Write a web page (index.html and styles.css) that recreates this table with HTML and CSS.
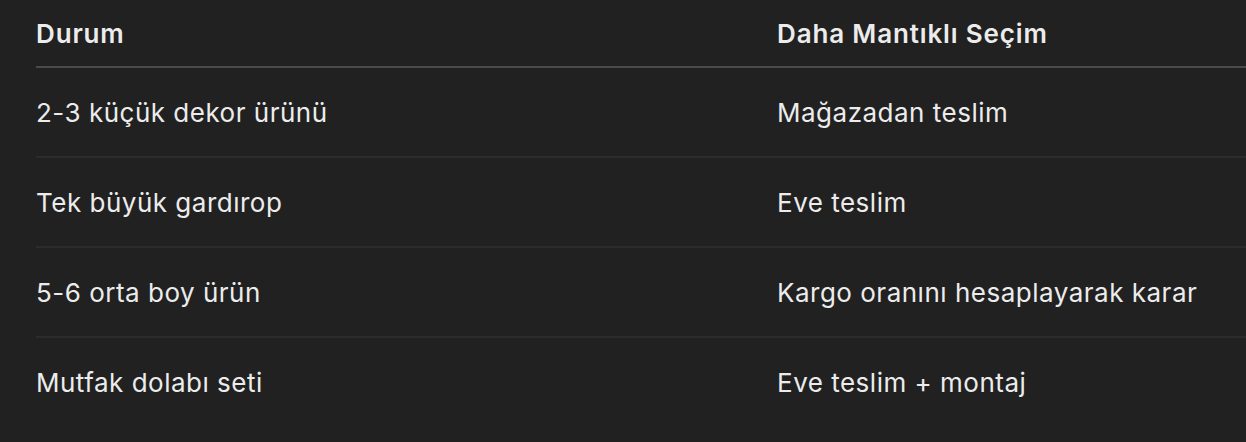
FILE: index.html
```html
<!DOCTYPE html>
<html lang="tr">
<head>
<meta charset="utf-8">
<link rel="stylesheet" href="styles.css">
</head>
<body>
<div class="wrap">
  <div class="table">
    <div class="row head">
      <div class="cell">Durum</div>
      <div class="cell">Daha Mantıklı Seçim</div>
    </div>
    <div class="row">
      <div class="cell">2-3 küçük dekor ürünü</div>
      <div class="cell">Mağazadan teslim</div>
    </div>
    <div class="row">
      <div class="cell">Tek büyük gardırop</div>
      <div class="cell">Eve teslim</div>
    </div>
    <div class="row">
      <div class="cell">5-6 orta boy ürün</div>
      <div class="cell">Kargo oranını hesaplayarak karar</div>
    </div>
    <div class="row last">
      <div class="cell">Mutfak dolabı seti</div>
      <div class="cell">Eve teslim + montaj</div>
    </div>
  </div>
</div>
</body>
</html>
```
FILE: styles.css
```css
html, body {
  margin: 0;
  padding: 0;
  background: #212121;
}
body {
  width: 1246px;
  height: 442px;
  overflow: hidden;
  font-family: Inter, "Noto Sans", sans-serif;
  color: #ececec;
}
.wrap {
  padding-left: 36px;
}
.table {
  width: 100%;
}
.row {
  display: grid;
  grid-template-columns: 741px 1fr;
  height: 88px;
  align-items: center;
  border-bottom: 2px solid #2c2c2c;
  font-size: 26px;
  font-weight: 400;
  letter-spacing: 0.5px;
}
.row.head {
  height: 66px;
  border-bottom: 2px solid #4a4a4a;
  font-weight: 600;
  letter-spacing: 0.85px;
}
.row.last {
  border-bottom: none;
}
.cell {
  white-space: nowrap;
  overflow: hidden;
}
```
